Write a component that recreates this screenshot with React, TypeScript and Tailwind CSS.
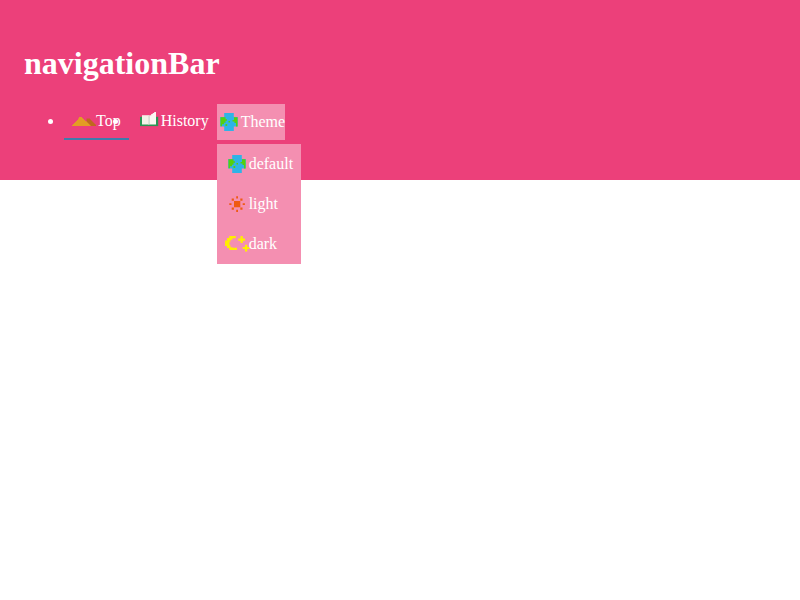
import React from "react";

type IconProps = { className?: string };

function PyramidIcon({ className = "" }: IconProps) {
  return (
    <svg viewBox="0 0 24 18" width="24" height="18" className={className}>
      <path fill="#bf681f" d="M14.500 6.500H18v1h1v1h1v1h1v1h1v1h1v1h1v1.500h-9.500z" />
      <path fill="#e39c24" d="M7 5h3v1h1v1h1v1h1v1h1.500v1h1v1h1v1h1v1h1v1H0v-1h1v-1h1v-1h1v-1h1V9h1V8h1V7h.5V6H7z" />
    </svg>
  );
}

function BookIcon({ className = "" }: IconProps) {
  return (
    <svg viewBox="0 0 24 18" width="24" height="18" className={className}>
      <path fill="#2b9454" d="M3 4.800h18.200v9.300H3z" />
      <path fill="#f4f1e8" d="M5 3.200h7.500v9.300H5z" />
      <path fill="#dedbd4" d="M11.200 3.500h1.500v9h-1.500z" />
      <path fill="#fbf7f2" d="M12.700 3.200h1.500V2h1.500V1h1.500V0H19v12.500h-6.300z" />
    </svg>
  );
}

function EarthIcon({ className = "" }: IconProps) {
  return (
    <svg viewBox="0 0 24 18" width="24" height="18" className={className}>
      <path fill="#2fb3e6" d="M7.200 0h9.600v4h4v9.500h-4V18H7.200v-4.500h-4V4h4z" />
      <path fill="#55d00c" d="M3.500 4.300h5v2H10v1.500H8.500v2H7v1.400H5v2H3.500zM20.500 4.300v9.200H19V10h-1.500V8.500h-2V7H17V4.300zM11.500 8H13v1.500h-1.500zM8.500 11h1.700v2H8.500z" />
    </svg>
  );
}

function SunIcon({ className = "" }: IconProps) {
  return (
    <svg viewBox="0 0 24 18" width="24" height="18" className={className}>
      <path fill="#ef5a13" d="M9 6h6.300v6.300H9zM11.200 1.300h1.800v2.200h-1.800zM11.200 14.800h1.800V17h-1.800zM4.300 8.200h2.200V10H4.300zM17.700 8.200h2.200V10h-2.200zM6.700 3.500h2.200v2.200H6.700zM15.300 3.500h2.200v2.200h-2.200zM6.700 12.600h2.200v2.200H6.700zM15.300 12.600h2.200v2.200h-2.200z" />
    </svg>
  );
}

function MoonIcon({ className = "" }: IconProps) {
  return (
    <svg viewBox="0 0 24 18" width="24" height="18" className={className}>
      <path fill="#ffee00" d="M4.200 1h6.600v2.200H7.500v1.500H5.500v2H4.500v3.500h1v2H7.500v.6H12V15H4.200v-2H2v-2H0V5.500h2V3h2.200zM15.500 1h2.300v2.500H20v2.200h-2.200V8h-2.300V5.700h-2.300V3.500h2.300zM20 9.800h2.200v2.300h2.300v2h-2.300v2.500H20v-2.500h-2.300v-2H20z" />
    </svg>
  );
}

const themes = [
  { label: "default", Icon: EarthIcon },
  { label: "light", Icon: SunIcon },
  { label: "dark", Icon: MoonIcon },
];

export default function App() {
  return (
    <div className="min-h-screen bg-white">
      <header className="h-[180px] bg-[#ec407a] px-6 pt-[45px] font-['Liberation_Serif',serif] text-base leading-[18px] text-white">
        <h1 className="h-[59px] text-[32px] leading-[37px] font-bold">navigationBar</h1>
        <ul className="flex h-9 list-disc pl-10 whitespace-nowrap">
          <li className="h-9 border-b-2 border-[#3d7cab] p-2">
            <PyramidIcon className="inline-block align-bottom" />
            <span>Top</span>
          </li>
          <li className="h-9 p-2">
            <BookIcon className="inline-block align-bottom" />
            <span>History</span>
          </li>
          <li className="relative flex h-9 items-center bg-[#f48fb1]">
            <EarthIcon className="shrink-0" />
            <span>Theme</span>
            <ul className="absolute top-10 left-0 list-none bg-[#f48fb1]">
              {themes.map(({ label, Icon }) => (
                <li key={label} className="flex h-10 items-center px-2">
                  <Icon className="shrink-0 overflow-visible" />
                  <span>{label}</span>
                </li>
              ))}
            </ul>
          </li>
        </ul>
      </header>
    </div>
  );
}
